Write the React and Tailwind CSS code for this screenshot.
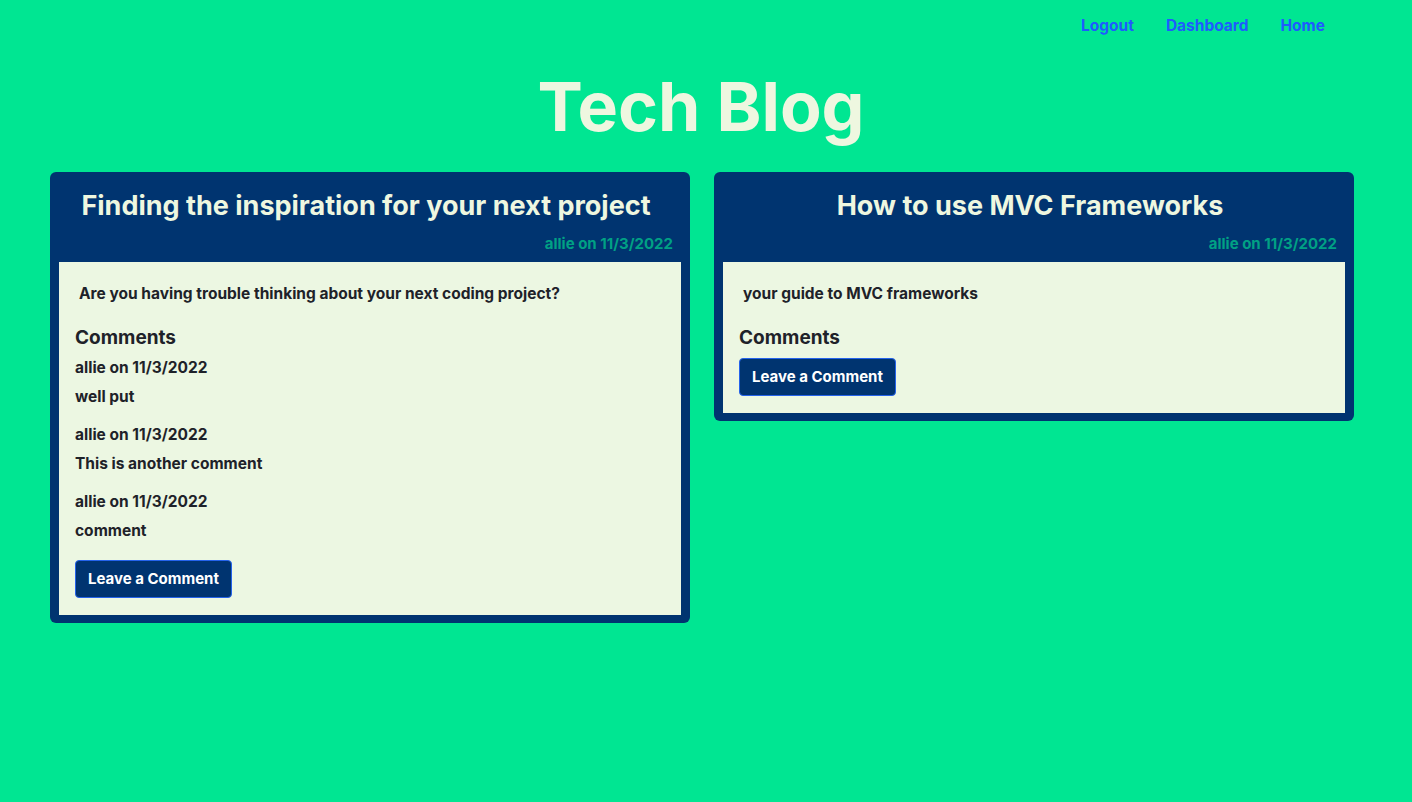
const posts = [
  {
    id: 1,
    title: "Finding the inspiration for your next project",
    author: "allie",
    date: "11/3/2022",
    content: "Are you having trouble thinking about your next coding project?",
    comments: [
      { author: "allie", date: "11/3/2022", text: "well put" },
      { author: "allie", date: "11/3/2022", text: "This is another comment" },
      { author: "allie", date: "11/3/2022", text: "comment" },
    ],
  },
  {
    id: 2,
    title: "How to use MVC Frameworks",
    author: "allie",
    date: "11/3/2022",
    content: "your guide to MVC frameworks",
    comments: [],
  },
];

const PostCard = ({ post }) => (
  <div className="bg-[#003470] rounded-md px-[9px] pb-[8px]">
    <div className="pt-[16px] pb-[8px] pr-[8px]">
      <h2 className="text-center text-[27px] leading-[36px] font-bold text-[#eef7e0]">{post.title}</h2>
      <p className="text-right text-[15px] leading-[20px] font-bold text-[#00a184] mt-[10px]">
        {post.author} on {post.date}
      </p>
    </div>
    <div className="bg-[#ecf7e2] px-[16px] pt-[22px] pb-[17px] text-[#1e2229]">
      <p className="pl-[4px] text-[15.5px] leading-[20px] font-bold">{post.content}</p>
      <h3 className="mt-[22px] text-[19px] leading-[24px] font-bold">Comments</h3>
      {post.comments.length > 0 && (
        <div className="flex flex-col gap-[18px] mt-[8px] mb-[11px]">
          {post.comments.map((c, i) => (
            <div key={i}>
              <p className="text-[15.5px] leading-[20px] font-bold">{c.author} on {c.date}</p>
              <p className="text-[15.5px] leading-[20px] font-bold mt-[9px]">{c.text}</p>
            </div>
          ))}
        </div>
      )}
      <button className="mt-[8px] h-[38px] px-[12px] bg-[#003470] border border-[#2563eb] rounded-[4px] text-white text-[15px] font-bold">
        Leave a Comment
      </button>
    </div>
  </div>
);

export default function App() {
  return (
    <div className="min-h-[802px] bg-[#00e692] font-['Inter','Roboto',sans-serif]">
      <nav className="flex justify-end gap-[32px] pr-[87px] pt-[16px] h-[58px]">
        <a href="#" className="text-[15.5px] leading-[20px] font-bold text-[#1f5bff]">Logout</a>
        <a href="#" className="text-[15.5px] leading-[20px] font-bold text-[#1f5bff]">Dashboard</a>
        <a href="#" className="text-[15.5px] leading-[20px] font-bold text-[#1f5bff]">Home</a>
      </nav>
      <h1 className="text-center pr-[10px] text-[68px] leading-[96px] font-bold text-[#eef7e0]">Tech Blog</h1>
      <main className="grid grid-cols-2 gap-[24px] items-start pl-[50px] pr-[58px] mt-[18px]">
        {posts.map((p) => (
          <PostCard key={p.id} post={p} />
        ))}
      </main>
    </div>
  );
}
